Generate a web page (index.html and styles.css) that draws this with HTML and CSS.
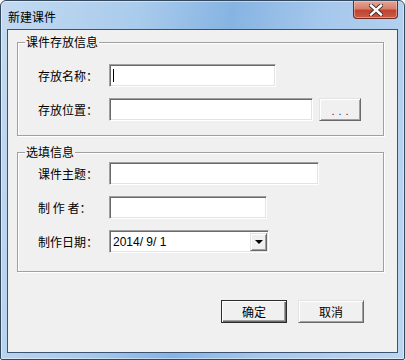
FILE: index.html
```html
<!DOCTYPE html>
<html lang="zh-CN">
<head>
  <meta charset="UTF-8">
  <title>新建课件</title>
  <link rel="stylesheet" href="styles.css">
</head>
<body>
  <div class="window">
    <div class="titlebar">
      <span class="title">新建课件</span>
      <div class="close">
        <svg width="14" height="12" viewBox="0 0 14 12">
          <path d="M2 1.5 L12 10.5 M12 1.5 L2 10.5" stroke="#3a2a2a" stroke-width="4.2" stroke-linecap="square"/>
          <path d="M2 1.5 L12 10.5 M12 1.5 L2 10.5" stroke="#fff" stroke-width="2.4" stroke-linecap="square"/>
        </svg>
      </div>
    </div>

    <div class="client">
      <div class="group group-store">
        <span class="group-title">课件存放信息</span>
        <div class="row">
          <span class="label">存放名称：</span>
          <div class="field field-name"><span class="caret"></span></div>
        </div>
        <div class="row">
          <span class="label">存放位置：</span>
          <div class="field field-path"></div>
          <button class="btn btn-browse">...</button>
        </div>
      </div>

      <div class="group group-optional">
        <span class="group-title">选填信息</span>
        <div class="row">
          <span class="label">课件主题：</span>
          <div class="field field-topic"></div>
        </div>
        <div class="row">
          <span class="label">制 作 者：</span>
          <div class="field field-author"></div>
        </div>
        <div class="row">
          <span class="label">制作日期：</span>
          <div class="field field-date">
            <span class="date-text">2014/ 9/ 1</span>
            <span class="drop"><i class="arrow"></i></span>
          </div>
        </div>
      </div>

      <div class="actions">
        <button class="btn btn-ok">确定</button>
        <button class="btn btn-cancel">取消</button>
      </div>
    </div>
  </div>
</body>
</html>
```

FILE: styles.css
```css
body {
  margin: 0;
  font-family: "Noto Sans CJK SC", "Liberation Sans", sans-serif;
  font-size: 12px;
  color: #000;
}
.window {
  width: 405px;
  height: 360px;
  box-sizing: border-box;
  border: 1px solid #34495e;
  border-radius: 6px 6px 2px 2px;
  padding: 0 6px 6px 6px;
  background: linear-gradient(100deg, #c3daf1 0%, #a9cbec 30%, #86b4e2 50%, #a6c8ec 70%, #bcd6f0 100%);
  box-shadow: inset 0 0 0 1px rgba(255, 255, 255, 0.45);
}
.titlebar {
  height: 28px;
  display: flex;
  justify-content: space-between;
  align-items: center;
}
.title {
  padding-left: 1px;
  padding-top: 2px;
  font-size: 12px;
  color: #000;
}
.close {
  align-self: flex-start;
  width: 45px;
  height: 18px;
  box-sizing: border-box;
  border: 1px solid #6b2a22;
  border-top: none;
  border-radius: 0 0 4px 4px;
  background: linear-gradient(#e6a595 0%, #d7806c 45%, #c0442f 55%, #cd5a44 100%);
  box-shadow: inset 0 0 0 1px rgba(255, 220, 210, 0.45);
  display: flex;
  align-items: center;
  justify-content: center;
}
.client {
  height: 324px;
  box-sizing: border-box;
  border: 1px solid #3b5270;
  background: #f0f0f0;
  padding: 12px 13px 0 9px;
}

/* group boxes */
.group {
  position: relative;
  box-sizing: border-box;
  border: 1px solid #a0a0a0;
  box-shadow: inset 1px 1px 0 #fff, 1px 1px 0 #fff;
  display: flex;
  flex-direction: column;
  gap: 11px;
  padding-left: 20px;
}
.group-store {
  height: 94px;
  padding-top: 21px;
}
.group-optional {
  height: 120px;
  margin-top: 16px;
  padding-top: 9px;
}
.group-title {
  position: absolute;
  top: -9px;
  left: 7px;
  padding: 0 1px;
  background: #f0f0f0;
  line-height: 16px;
}
.row {
  display: flex;
  align-items: center;
  height: 23px;
}
.label {
  width: 71px;
  white-space: pre;
}

/* sunken text boxes */
.field {
  position: relative;
  height: 23px;
  box-sizing: border-box;
  background: #fff;
  border-top: 1px solid #a0a0a0;
  border-left: 1px solid #a0a0a0;
  border-right: 1px solid #fff;
  border-bottom: 1px solid #fff;
  box-shadow: inset 1px 1px 0 #696969, inset -1px -1px 0 #e3e3e3;
  display: flex;
  align-items: center;
}
.field-name { width: 167px; }
.field-path { width: 204px; }
.field-topic { width: 210px; }
.field-author { width: 158px; }
.field-date { width: 160px; }
.caret {
  width: 1px;
  height: 13px;
  margin-left: 3px;
  background: #000;
}
.date-text {
  flex: 1;
  padding-left: 3px;
  font-family: "Liberation Sans", sans-serif;
  font-size: 12px;
}
.drop {
  align-self: stretch;
  width: 17px;
  margin: 2px 1px 1px 0;
  box-sizing: border-box;
  background: #f0f0f0;
  border-top: 1px solid #e3e3e3;
  border-left: 1px solid #e3e3e3;
  border-right: 1px solid #696969;
  border-bottom: 1px solid #696969;
  box-shadow: inset 1px 1px 0 #fff, inset -1px -1px 0 #a0a0a0;
  display: flex;
  align-items: center;
  justify-content: center;
}
.arrow {
  width: 0;
  height: 0;
  border-left: 4px solid transparent;
  border-right: 4px solid transparent;
  border-top: 4px solid #000;
}

/* raised buttons */
.btn {
  height: 23px;
  box-sizing: border-box;
  padding: 0;
  font: inherit;
  color: #000;
  background: #f0f0f0;
  border-top: 1px solid #e3e3e3;
  border-left: 1px solid #e3e3e3;
  border-right: 1px solid #696969;
  border-bottom: 1px solid #696969;
  box-shadow: inset 1px 1px 0 #fff, inset -1px -1px 0 #a0a0a0;
}
.btn-browse {
  width: 42px;
  margin-left: 6px;
  letter-spacing: 4px;
  padding-left: 4px;
  padding-top: 3px;
  font-family: "Liberation Sans", sans-serif;
  font-size: 11px;
  color: #1e1e5a;
}
.actions {
  display: flex;
  justify-content: flex-end;
  gap: 11px;
  margin-top: 28px;
  padding-right: 20px;
}
.actions .btn {
  width: 66px;
}
.btn-ok {
  border: 1px solid #2b2b2b;
  box-shadow: inset 1px 1px 0 #fff, inset -1px -1px 0 #696969, inset -2px -2px 0 #a0a0a0;
}
```
